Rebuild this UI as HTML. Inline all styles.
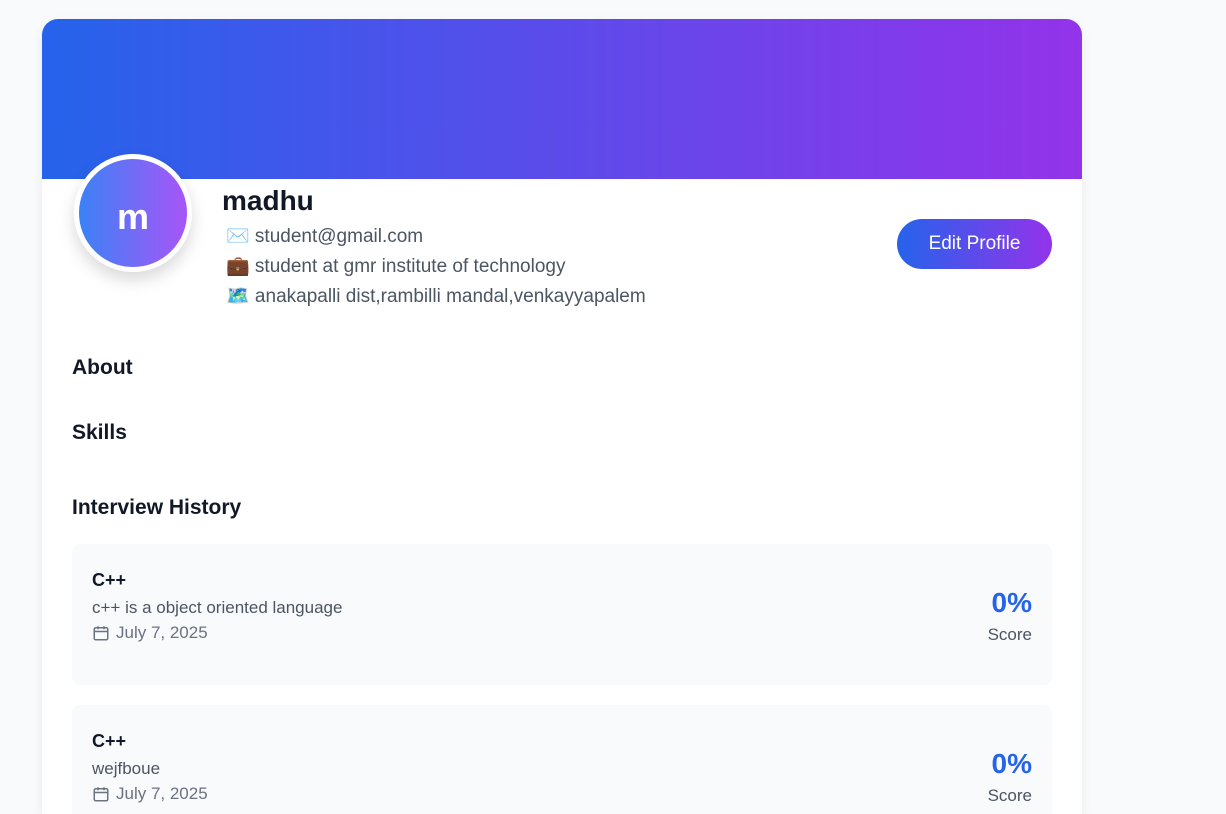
<!DOCTYPE html>
<html><head><style>
*{margin:0;padding:0;box-sizing:border-box}
html,body{width:1226px;height:814px;overflow:hidden}
body{background:#f9fafb;font-family:"Liberation Sans","DejaVu Sans",sans-serif;color:#111827}
.card{position:absolute;left:42px;top:19px;width:1040px;height:795px;background:#fff;border-radius:16px 16px 0 0;box-shadow:0 4px 12px rgba(0,0,0,0.06);overflow:hidden}
.banner{height:160px;background:linear-gradient(90deg,#2563eb,#9333ea)}
.avatar{position:absolute;left:32px;top:135px;width:118px;height:118px;border-radius:50%;border:5px solid #fff;background:linear-gradient(90deg,#3b82f6,#a855f7);color:#fff;font-size:36px;font-weight:bold;display:flex;align-items:center;justify-content:center;padding-top:8px;box-shadow:0 8px 16px rgba(0,0,0,0.15)}
.name{position:absolute;left:180px;top:166px;font-size:28px;font-weight:bold}
.line{position:absolute;left:184px;font-size:19px;color:#4b5563;white-space:nowrap}
.btn{position:absolute;left:855px;top:200px;width:155px;height:50px;border-radius:25px;background:linear-gradient(90deg,#2563eb,#9333ea);color:#fff;font-size:19px;display:flex;align-items:center;justify-content:center}
h2{position:absolute;left:30px;font-size:21px;font-weight:bold;color:#111827}
.item{position:absolute;left:30px;width:980px;height:141px;background:#f8fafc;border-radius:8px}
.t{position:absolute;left:20px;top:26px;font-size:18px;font-weight:bold}
.d{position:absolute;left:20px;top:54px;font-size:17px;color:#4b5563}
.dt{position:absolute;left:20px;top:79px;font-size:17px;color:#6b7280;display:flex;align-items:center;gap:6px}
.sc{position:absolute;right:20px;top:43px;text-align:right}
.sc b{display:block;font-size:28px;color:#2563eb;margin-bottom:6px}
.sc span{font-size:17px;color:#4b5563}
</style></head><body>
<div class="card">
<div class="banner"></div>
<div class="avatar">m</div>
<div class="name">madhu</div>
<div class="line" style="top:205px">✉️ student@gmail.com</div>
<div class="line" style="top:235px">💼 student at gmr institute of technology</div>
<div class="line" style="top:265px">🗺️ anakapalli dist,rambilli mandal,venkayyapalem</div>
<div class="btn">Edit Profile</div>
<h2 style="top:337px">About</h2>
<h2 style="top:402px">Skills</h2>
<h2 style="top:477px">Interview History</h2>
<div class="item" style="top:525px">
<div class="t">C++</div><div class="d">c++ is a object oriented language</div>
<div class="dt"><svg width="18" height="18" viewBox="0 0 24 24" fill="none" stroke="#6b7280" stroke-width="2"><rect x="3" y="5" width="18" height="16" rx="2"/><path d="M3 10h18M8 3v4M16 3v4"/></svg>July 7, 2025</div>
<div class="sc"><b>0%</b><span>Score</span></div>
</div>
<div class="item" style="top:686px">
<div class="t">C++</div><div class="d">wejfboue</div>
<div class="dt"><svg width="18" height="18" viewBox="0 0 24 24" fill="none" stroke="#6b7280" stroke-width="2"><rect x="3" y="5" width="18" height="16" rx="2"/><path d="M3 10h18M8 3v4M16 3v4"/></svg>July 7, 2025</div>
<div class="sc"><b>0%</b><span>Score</span></div>
</div>
</div>
</body></html>
